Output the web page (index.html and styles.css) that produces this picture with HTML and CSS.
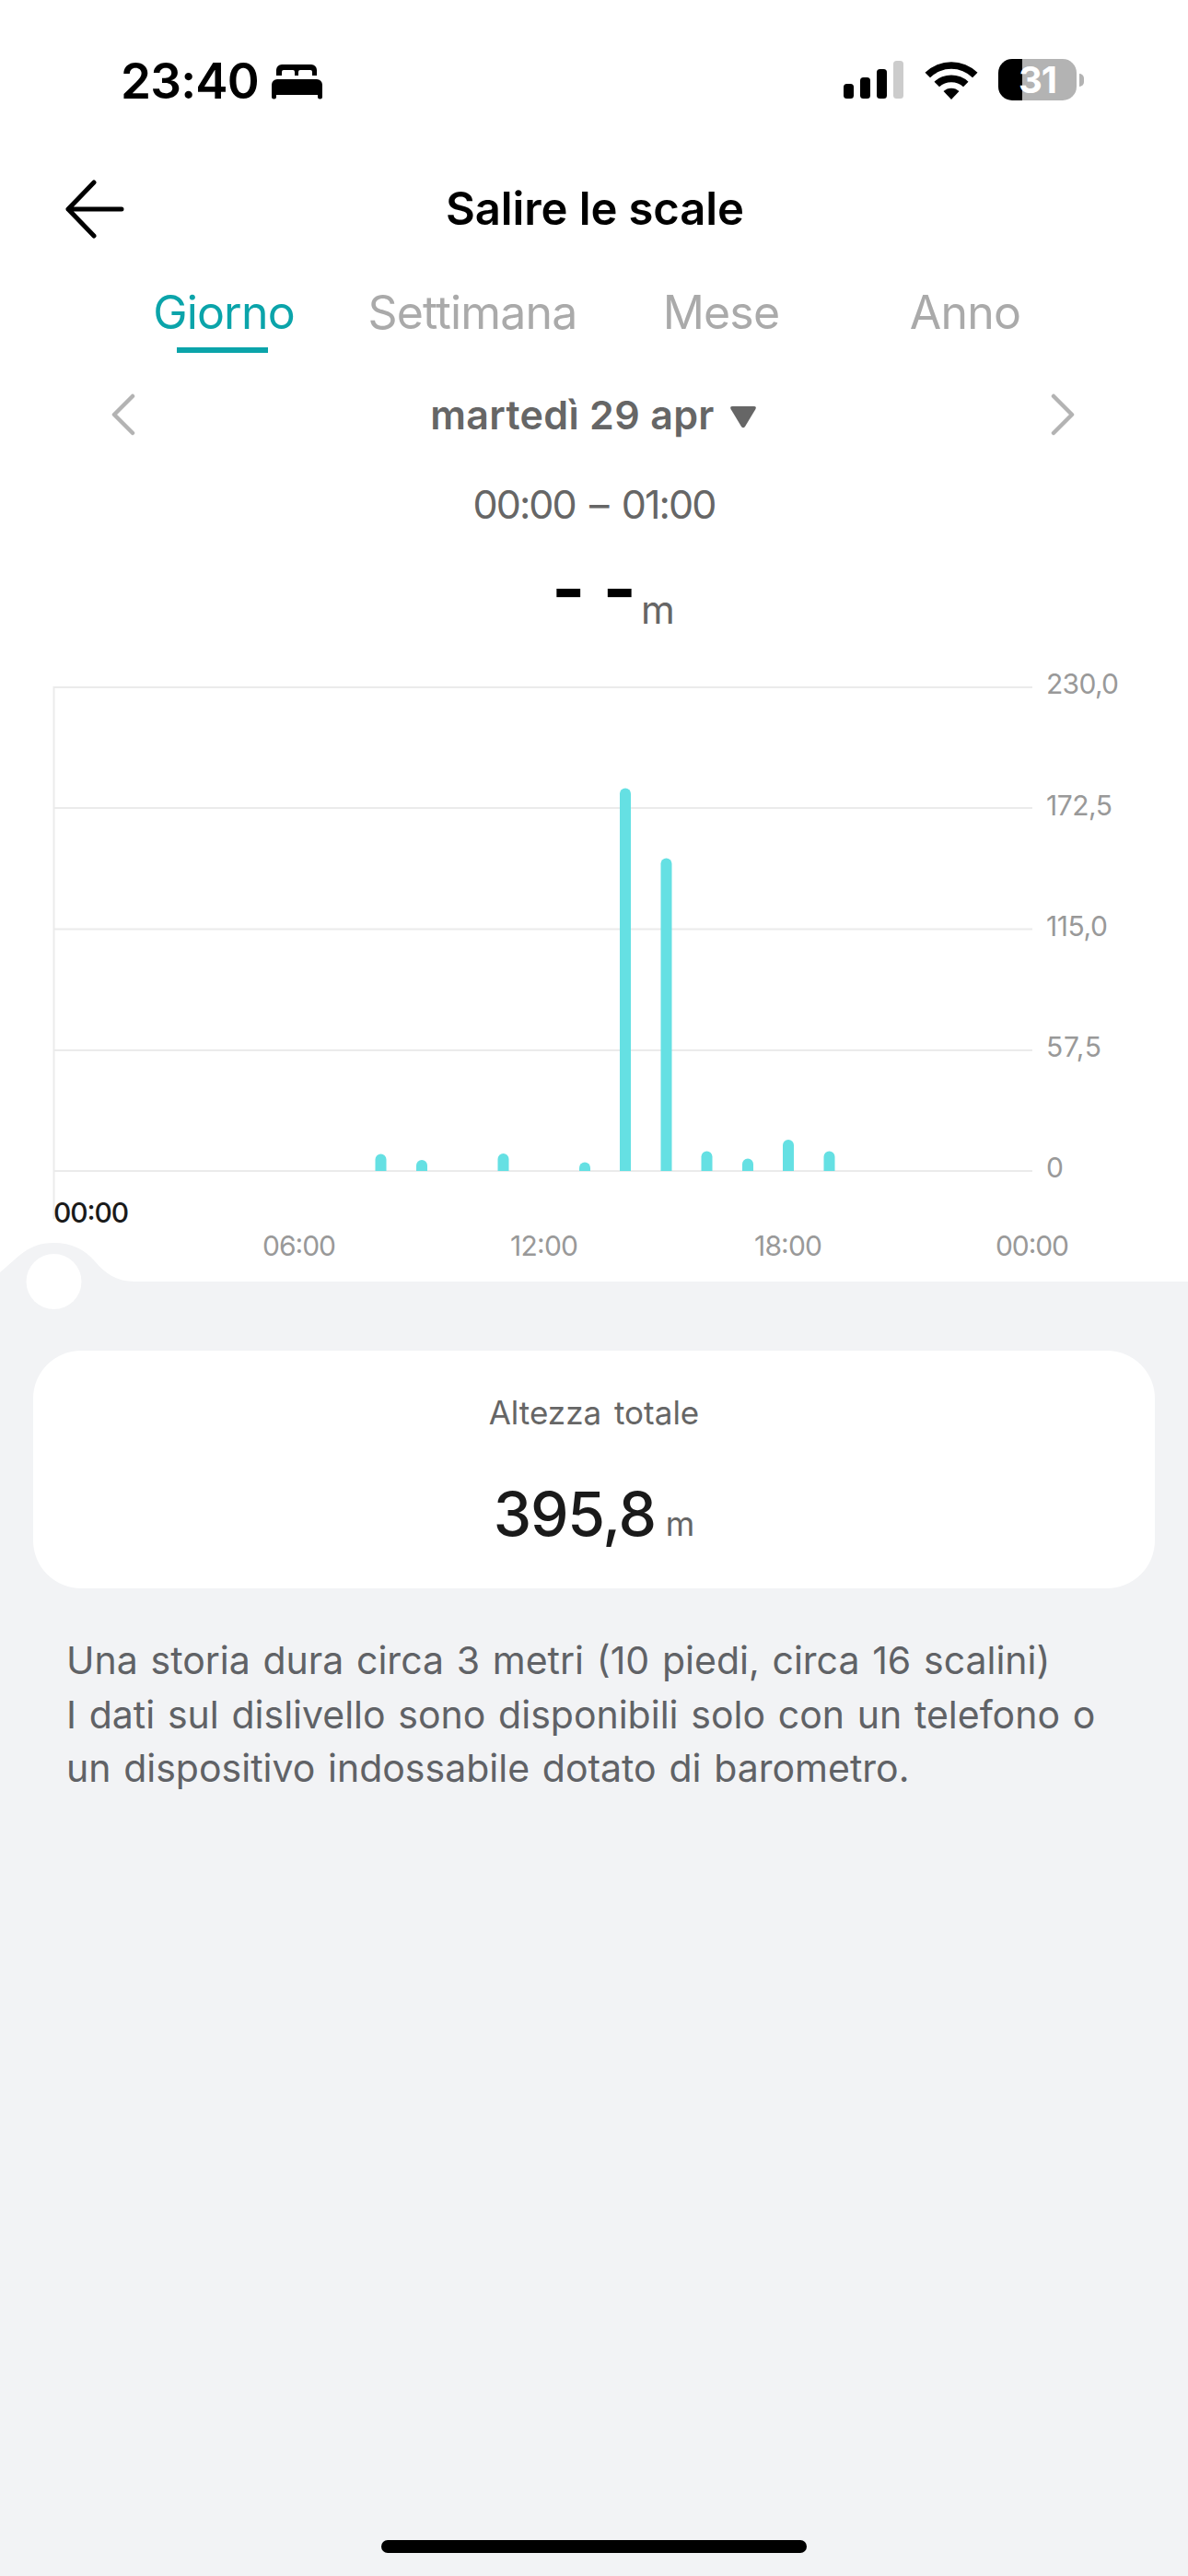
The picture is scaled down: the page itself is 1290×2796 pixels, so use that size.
FILE: index.html
```html
<!DOCTYPE html>
<html lang="it">
<head>
	<meta charset="UTF-8">
	<title>Salire le scale</title>
	<link rel="stylesheet" href="styles.css">
</head>
<body>
	<div class="status">
		<span class="clock">23:40</span>
		<svg class="bed" width="55" height="38" viewBox="0 0 55 38">
			<path d="M5 12V6a6 6 0 0 1 6-6h32a6 6 0 0 1 6 6v6h-5V8a2 2 0 0 0-2-2H31a2 2 0 0 0-2 2v4h-4V8a2 2 0 0 0-2-2H13a2 2 0 0 0-2 2v4z"/>
			<path d="M0 22a6 6 0 0 1 6-6h43a6 6 0 0 1 6 6v13a2.5 2.5 0 0 1-5 0v-2H5v2a2.5 2.5 0 0 1-5 0z"/>
		</svg>
		<svg class="signal" width="65" height="41" viewBox="0 0 65 41">
			<rect x="0" y="25" width="11" height="16" rx="3.5"/>
			<rect x="18" y="18" width="11" height="23" rx="3.5"/>
			<rect x="36" y="9" width="11" height="32" rx="3.5"/>
			<rect class="off" x="54" y="0" width="11" height="41" rx="3.5"/>
		</svg>
		<svg class="wifi" width="58" height="42" viewBox="0 0 58 42">
			<path d="M0.500 12.800A41 41 0 0 1 57.500 12.800L52 18.200A33 33 0 0 0 6 18.200Z"/>
			<path d="M10.500 22.800A27 27 0 0 1 47.500 22.800L42 28.300A19.500 19.500 0 0 0 16 28.300Z"/>
			<path d="M20.500 33A12.500 12.500 0 0 1 37.500 33L29 42Z"/>
		</svg>
		<div class="battery"><span>31</span></div>
		<i class="nub"></i>
	</div>

	<div class="nav">
		<svg class="back" width="64" height="64" viewBox="0 0 64 64">
			<path d="M61 32H3M31 3L3 32l28 29"/>
		</svg>
		<h1>Salire le scale</h1>
	</div>

	<div class="tabs">
		<span class="tab active">Giorno</span>
		<span class="tab">Settimana</span>
		<span class="tab">Mese</span>
		<span class="tab last">Anno</span>
	</div>

	<div class="date">
		<svg class="arrow" width="26" height="46" viewBox="0 0 26 46"><path d="M23 3L3 23l20 20"/></svg>
		<div class="day">
			<span>martedì 29 apr</span>
			<svg width="28" height="24" viewBox="0 0 28 24"><path d="M2.500 0h23q3.500 0 1.800 3.200L16 22q-2 2.600-4 0L.700 3.200Q-1 0 2.500 0z"/></svg>
		</div>
		<svg class="arrow" width="26" height="46" viewBox="0 0 26 46"><path d="M3 3l20 20L3 43"/></svg>
	</div>

	<div class="hours">00:00 – 01:00</div>

	<div class="value"><b>-</b><b>-</b><span>m</span></div>

	<svg class="chart" width="1290" height="704" viewBox="0 0 1290 704">
		<g class="grid">
			<path d="M58.500 26H1121M58.500 157H1121M58.500 288.500H1121M58.500 420H1121M58.500 551H1121"/>
			<path d="M58.500 25V603"/>
		</g>
		<g class="bars">
			<path d="M407.500 551v-12.500a6 6 0 0 1 12 0V551z"/>
			<path d="M452 551v-6a6 6 0 0 1 12 0v6z"/>
			<path d="M540.500 551v-13a6 6 0 0 1 12 0v13z"/>
			<path d="M629 551v-3.500a6 6 0 0 1 12 0v3.500z"/>
			<path d="M673 551V141.500a6 6 0 0 1 12 0V551z"/>
			<path d="M717.500 551V217.500a6 6 0 0 1 12 0V551z"/>
			<path d="M761.500 551v-15.500a6 6 0 0 1 12 0V551z"/>
			<path d="M806 551v-7.500a6 6 0 0 1 12 0v7.500z"/>
			<path d="M850 551v-28a6 6 0 0 1 12 0v28z"/>
			<path d="M894.500 551v-15.500a6 6 0 0 1 12 0V551z"/>
		</g>
		<g class="labels">
			<text x="1136" y="33" textLength="79">230,0</text>
			<text x="1136" y="165" textLength="72">172,5</text>
			<text x="1136" y="296" textLength="67">115,0</text>
			<text x="1136" y="427" textLength="60">57,5</text>
			<text x="1136" y="558">0</text>
		</g>
		<g class="labels times">
			<text x="325" y="643" textLength="80">06:00</text>
			<text x="591" y="643" textLength="74">12:00</text>
			<text x="856" y="643" textLength="74">18:00</text>
			<text x="1121" y="643" textLength="80">00:00</text>
		</g>
		<text class="current" x="58" y="607" textLength="82">00:00</text>
		<!-- slider -->
		<path class="track" d="M0 661C20 645 30 629 58 629C78 629 92 636 103 649C114 662 127 671 146 671H1290V704H0z"/>
		<circle class="knob" cx="58.500" cy="671" r="30"/>
	</svg>

	<div class="content">
		<div class="card">
			<div class="name">Altezza totale</div>
			<div class="total"><b>395,8</b><span>m</span></div>
		</div>
		<p class="note">Una storia dura circa 3 metri (10 piedi, circa 16 scalini)<br>I dati sul dislivello sono disponibili solo con un telefono o<br>un dispositivo indossabile dotato di barometro.</p>
		<div class="home"></div>
	</div>
</body>
</html>
```
FILE: styles.css
```css
*{box-sizing: border-box;}
body{margin: 0;width: 1290px;height: 2796px;display: flex;flex-direction: column;background-color: #fff;
	font-family: Inter,"Liberation Sans",sans-serif;color: #666;overflow: hidden;}
svg{display: block;flex: none;}

.status{height: 175px;padding: 0 113px 0 131px;display: flex;align-items: center;color: #000;}
.clock{width: 164px;font-size: 53px;font-weight: 600;letter-spacing: -0.8px;white-space: nowrap;}
.bed{margin-top: 2px;}
.signal{margin-left: auto;margin-top: -2px;}
.signal .off{fill: #ccc;}
.wifi{margin: -2px 22px 0 23px;}
.battery{width: 85px;height: 45px;margin-top: -2px;border-radius: 15px;background: linear-gradient(to right,#000 26px,#b3b3b3 26px);
	display: flex;align-items: center;justify-content: center;color: #fff;font-size: 40px;font-weight: 700;letter-spacing: -1px;}
.nub{width: 5px;height: 14px;margin: -2px 0 0 3px;border-radius: 0 7px 7px 0;background-color: #b3b3b3;}

.nav{height: 104px;padding: 0 71px;display: flex;align-items: center;}
.nav h1{flex: 1;margin: -2px 62px 0 0;text-align: center;color: #000;font-size: 49px;font-weight: 600;letter-spacing: -0.1px;}
.back path{fill: none;stroke: #000;stroke-width: 5;stroke-linecap: round;stroke-linejoin: round;}

.tabs{height: 120px;padding: 0 102px 0 108px;display: grid;grid-template-columns: repeat(4,270px);}
.tab{position: relative;display: flex;align-items: center;justify-content: center;font-size: 50px;color: #aaa;letter-spacing: -0.8px;}
.tab.last{padding-right: 10px;}
.active{color: #0ba4aa;}
.active::after{content: "";position: absolute;left: 84px;bottom: 16px;width: 99px;height: 6px;background-color: #0ba4aa;}

.date{height: 102px;padding: 0 123px 0 121px;display: flex;align-items: center;justify-content: space-between;}
.arrow path{fill: none;stroke: #b3b3b3;stroke-width: 4.500;stroke-linecap: round;stroke-linejoin: round;}
.day{display: flex;align-items: center;gap: 17px;font-size: 43px;font-weight: 600;letter-spacing: 0.3px;}
.day svg{margin-top: 6px;fill: #666;}

.hours{height: 92px;line-height: 92px;text-align: center;font-size: 43px;letter-spacing: -1.9px;word-spacing: 5px;}
.value{height: 127px;display: flex;justify-content: center;align-items: flex-start;padding: 6px 0 0 42px;}
.value b{margin-right: 19px;color: #000;font-size: 78px;font-weight: 700;line-height: 80px;}
.value b + b{margin-right: 5px;}
.value span{font-size: 42px;line-height: 50px;padding-top: 38px;}

.grid path{fill: none;stroke: #ebebeb;stroke-width: 2;}
.bars path{fill: #65e0e3;}
.labels text{font-size: 30px;fill: #999;}
.times{text-anchor: middle;}
.current{font-size: 30px;font-weight: 500;fill: #1a1a1a;}
.track{fill: #f2f3f5;}
.knob{fill: #fff;}

.content{flex: 1;padding: 42px 36px 25px;display: flex;flex-direction: column;background-color: #f2f3f5;}
.card{height: 258px;padding-top: 37px;border-radius: 52px;background-color: #fff;text-align: center;}
.name{font-size: 35px;line-height: 60px;word-spacing: 4px;}
.total{height: 100px;margin-top: 30px;display: flex;justify-content: center;align-items: baseline;line-height: 100px;}
.total b{color: #1a1a1a;font-size: 66px;font-weight: 500;letter-spacing: -1.2px;}
.total span{margin-left: 11px;font-size: 36px;}
.note{margin: 49px 0 0 36px;font-size: 41px;line-height: 58.5px;word-spacing: 2.2px;color: #606266;white-space: nowrap;}
.home{width: 462px;height: 14px;margin: auto auto 0;border-radius: 7px;background-color: #000;}
```
